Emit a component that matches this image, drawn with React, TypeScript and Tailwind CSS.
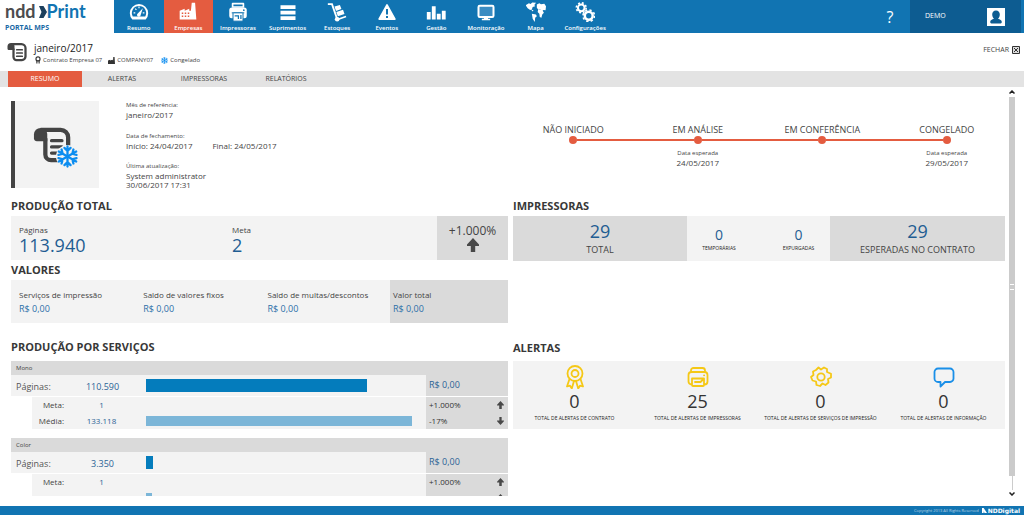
import type { ReactNode } from "react";

const navItems: { label: string; icon: ReactNode }[] = [
  {
    label: "Resumo",
    icon: (
      <>
        <path d="M4 21A11 11 0 1 1 20 21Z" fill="#fff" />
        <path d="M4.500 17.500A8.600 8.600 0 1 1 19.500 17.500Z" fill="#1174b2" />
        <path d="M5.500 13h2M7.500 8l1.400 1.400M12 5.500v2M16.500 13h2" stroke="#fff" strokeWidth="1.400" />
        <path d="M16.600 7.400 14 15.500a2.200 2.200 0 1 1-3.200-2Z" fill="#fff" />
      </>
    ),
  },
  {
    label: "Empresas",
    icon: (
      <>
        <path d="M2 21V10.500l6-2.500v2.500L13.500 8v2.500h2L16.500 1h4L22 21Z" fill="#fff" />
        <path d="M4.500 13.500h9.500M4.500 17h9.500" stroke="#e45c40" strokeWidth="1.700" strokeDasharray="1.800 1.800" />
      </>
    ),
  },
  {
    label: "Impressoras",
    icon: (
      <>
        <path d="M5.500 2h13v4h-13Z" fill="#1174b2" stroke="#fff" strokeWidth="2" strokeLinejoin="round" />
        <rect x="1.500" y="6.500" width="21" height="13" rx="3" fill="#fff" />
        <path d="M4.500 13h15" stroke="#1174b2" strokeWidth="1.300" />
        <rect x="6" y="13" width="12" height="10" rx="1" fill="#fff" stroke="#1174b2" strokeWidth="1.200" />
        <path d="M8 16.500h4.500v4M15.500 15.500v5" stroke="#1174b2" strokeWidth="1.500" fill="none" />
        <circle cx="19" cy="9.800" r="1" fill="#1174b2" />
      </>
    ),
  },
  {
    label: "Suprimentos",
    icon: <path d="M3 4h18v4.500H3ZM3 10.500h18V15H3ZM3 17h18v4.500H3Z" fill="#fff" />,
  },
  {
    label: "Estoques",
    icon: (
      <>
        <path d="M1 2.500h5L12 20" fill="none" stroke="#fff" strokeWidth="2.200" />
        <path d="m9 5.500 6.500-2 1.800 5-6.500 2.200ZM11.200 12l8-2.600 1.800 5-8 2.700ZM14 19.500l8.500-3 .7 1.800-8.500 3Z" fill="#fff" />
        <circle cx="12.200" cy="20.700" r="2.800" fill="#fff" />
      </>
    ),
  },
  {
    label: "Eventos",
    icon: (
      <>
        <path d="M12 3.500 21.500 20.500H2.500Z" fill="#fff" stroke="#fff" strokeWidth="2" strokeLinejoin="round" />
        <path d="M12 8.500v6.500M12 16.800v2.400" stroke="#1174b2" strokeWidth="2.400" />
      </>
    ),
  },
  {
    label: "Gestão",
    icon: <path d="M1 12h4.600v9H1ZM7 5h4.600v16H7ZM13 14h4.600v7H13ZM19 10.500h4.600V21H19Z" fill="#fff" />,
  },
  {
    label: "Monitoração",
    icon: (
      <>
        <rect x="3" y="4.500" width="18" height="13.500" rx="1.500" fill="#3a8cc2" stroke="#fff" strokeWidth="2.400" />
        <path d="M9.500 18h5v2h2.500v2H7v-2h2.500Z" fill="#fff" />
      </>
    ),
  },
  {
    label: "Mapa",
    icon: (
      <path
        d="M0 3.500 3.500 1.500l2 1 2-2 4.500.5-2 2.500 1 1.500-3 1-1 3-2 .5-3-2-2-3ZM7 14l5 1 1 2-2 2-.5 5-2.500-4ZM13 3l3-1.500 2 1.300 4-.8 2 3-.5 5-2.500-.5-2 1.500-2-2-2 .500-2-2.500ZM14.500 9.500h5l2 3.500-2 2-1 4-2-1-.500-4-2-2ZM6 9l3 1-1 1.500Z"
        fill="#fff"
      />
    ),
  },
  {
    label: "Configurações",
    icon: (
      <>
        <circle cx="7.500" cy="7" r="4" fill="none" stroke="#fff" strokeWidth="2.400" />
        <circle cx="7.500" cy="7" r="5.900" fill="none" stroke="#fff" strokeWidth="2" strokeDasharray="2.320 2.320" />
        <circle cx="16.500" cy="16.500" r="4.700" fill="none" stroke="#fff" strokeWidth="3" />
        <circle cx="16.500" cy="16.500" r="6.900" fill="none" stroke="#fff" strokeWidth="2" strokeDasharray="2.710 2.710" />
      </>
    ),
  },
];

const tabs = [
  { label: "RESUMO", width: "w-[74px]" },
  { label: "ALERTAS", width: "w-[74px]" },
  { label: "IMPRESSORAS", width: "w-[84px]" },
  { label: "RELATÓRIOS", width: "w-[74px]" },
];

const values = [
  { label: "Serviços de impressão", value: "R$ 0,00" },
  { label: "Saldo de valores fixos", value: "R$ 0,00" },
  { label: "Saldo de multas/descontos", value: "R$ 0,00" },
];

const services = [
  { name: "Mono", pages: "110.590", pagesBar: 79, goal: "1", average: "133.118", averageBar: 95, price: "R$ 0,00", goalDiff: "+1.000%", averageDiff: "-17%" },
  { name: "Color", pages: "3.350", pagesBar: 2.5, goal: "1", average: "2.989", averageBar: 2, price: "R$ 0,00", goalDiff: "+1.000%", averageDiff: "+12%" },
];

const steps = [
  { label: "NÃO INICIADO", date: "" },
  { label: "EM ANÁLISE", date: "24/05/2017" },
  { label: "EM CONFERÊNCIA", date: "" },
  { label: "CONGELADO", date: "29/05/2017" },
];

function ScrollIcon({ className }: { className: string }) {
  return (
    <svg viewBox="0 0 40 40" className={className} fill="none" stroke="currentColor" aria-hidden="true">
      <path d="M8 4h21a8 8 0 0 1 8 8v17a7 7 0 0 1-7 7H19a6 6 0 0 1-6-6V13" strokeWidth="4.500" />
      <path d="M8 2a7 7 0 0 0-7 7v4c0 2 1.500 3 3 3H15V9c0-4-3-7-7-7Z" fill="currentColor" stroke="none" />
      <path d="M19.500 15.500h11M19.500 22h11M19.500 28.500h11" strokeWidth="3.400" strokeLinecap="round" />
    </svg>
  );
}

function Snowflake({ className }: { className: string }) {
  const arm = "M12 12V1.500M8.800 3 12 6.200 15.200 3";
  return (
    <svg viewBox="0 0 24 24" className={className} fill="none" stroke="#0c8df0" strokeWidth="2.400" strokeLinecap="round" aria-hidden="true">
      {[0, 60, 120, 180, 240, 300].map((a) => (
        <path key={a} d={arm} transform={`rotate(${a} 12 12)`} />
      ))}
    </svg>
  );
}

function Arrow({ down = false, className }: { down?: boolean; className: string }) {
  return (
    <svg viewBox="0 0 12 14" className={className} fill="#484848" aria-hidden="true">
      <path d={down ? "M4 0h4v6h4v1.500L6 14 0 7.500V6h4Z" : "M6 0l6 6.500V8H8.200v6H3.800V8H0V6.500Z"} />
    </svg>
  );
}

function Heading({ children }: { children: ReactNode }) {
  return <h2 className="text-[11px] leading-5 font-bold text-[#383838]">{children}</h2>;
}

function ServiceBlock({ s }: { s: (typeof services)[number] }) {
  return (
    <div className="mb-[9px]">
      <h3 className="h-[14px] bg-[#dadada] pl-[5px] text-[6px] leading-[15px] text-[#444]">{s.name}</h3>
      <div className="flex h-[21px] bg-[#f3f3f3]">
        <div className="w-[55px] pl-[5px] text-[9px] leading-6 text-[#555]">Páginas:</div>
        <div className="w-[73px] text-center text-[9px] leading-6 text-[#2b6396]">{s.pages}</div>
        <div className="flex flex-1 items-center pl-[7px]">
          <div className="h-[13px] bg-[#047cbc]" style={{ width: `${s.pagesBar}%` }} />
        </div>
        <div className="w-[82px] bg-[#dadada] pl-[3px] text-[9px] leading-5 text-[#2b6396]">{s.price}</div>
      </div>
      <div className="mt-px ml-[21px] bg-[#f3f3f3] text-[8px] leading-4">
        <div className="flex h-4">
          <div className="w-8 text-right text-[#444]">Meta:</div>
          <div className="w-[75px] text-center text-[#2b6396]">{s.goal}</div>
          <div className="flex-1" />
          <div className="flex w-[82px] items-center justify-between bg-[#dadada] pr-1 pl-[3px] text-[#333]">
            {s.goalDiff}
            <Arrow className="h-2 w-[7px]" />
          </div>
        </div>
        <div className="flex h-4">
          <div className="w-8 text-right text-[#444]">Média:</div>
          <div className="w-[75px] text-center text-[#2b6396]">{s.average}</div>
          <div className="flex flex-1 items-center pl-[7px]">
            <div className="h-[10px] bg-[#7cb6d8]" style={{ width: `${s.averageBar}%` }} />
          </div>
          <div className="flex w-[82px] items-center justify-between bg-[#dadada] pr-1 pl-[3px] text-[#333]">
            {s.averageDiff}
            <Arrow down={s.averageDiff.startsWith("-")} className="h-2 w-[7px]" />
          </div>
        </div>
      </div>
    </div>
  );
}

const gold = "#f5c816";
const alerts: { label: string; count: string; icon: ReactNode }[] = [
  {
    label: "TOTAL DE ALERTAS DE CONTRATO",
    count: "0",
    icon: (
      <g stroke={gold}>
        <circle cx="12" cy="8.500" r="7.500" />
        <circle cx="12" cy="8.500" r="3.500" />
        <path d="M6.500 14 4 21.500l3-.8 1.800 2.800L11 16M17.500 14l2.500 7.500-3-.8-1.800 2.800L13 16" />
      </g>
    ),
  },
  {
    label: "TOTAL DE ALERTAS DE IMPRESSORAS",
    count: "25",
    icon: (
      <g stroke={gold}>
        <path d="M5 7V5.500a2.500 2.500 0 0 1 2.500-2.500h9A2.500 2.500 0 0 1 19 5.500V7M6 19.500H5.500A3 3 0 0 1 2.500 16.500v-6.500a3 3 0 0 1 3-3h13a3 3 0 0 1 3 3v6.500a3 3 0 0 1-3 3H18M6 13.500h12V20a1 1 0 0 1-1 1H7a1 1 0 0 1-1-1ZM18 10.300h.2M17 14.500 14.500 17H9" />
      </g>
    ),
  },
  {
    label: "TOTAL DE ALERTAS DE SERVIÇOS DE IMPRESSÃO",
    count: "0",
    icon: (
      <g stroke={gold}>
        <path d="m9.500 2.500 2.500 2 3-2 3 1.500v3l4 1.800v3.700l-3 1.500.500 3.500-3 2.500-3-1.500-2.500 2.500-3.500-1-.500-3.500-3.500-1L2 12l2.500-2-.5-3.500 3-1.500Z" />
        <circle cx="12" cy="12" r="3.700" />
      </g>
    ),
  },
  {
    label: "TOTAL DE ALERTAS DE INFORMAÇÃO",
    count: "0",
    icon: <path stroke="#1a8fe8" d="M6 3.500h12a3.500 3.500 0 0 1 3.500 3.500v6.500A3.500 3.500 0 0 1 18 17h-5l-4.500 4.500V17H6a3.500 3.500 0 0 1-3.500-3.500V7A3.500 3.500 0 0 1 6 3.500Z" />,
  },
];

export default function App() {
  return (
    <div className="flex h-screen flex-col overflow-hidden bg-white font-['Open_Sans','Noto_Sans',sans-serif] text-[#444]">
      <header className="flex h-[33px] shrink-0 bg-[#1174b2] text-white">
        <a href="#" className="flex w-[114px] flex-col bg-white pl-[5px]">
          <span className="flex items-center font-['Lato','Open_Sans',sans-serif] text-[18px] leading-[23px] font-bold text-[#4c4c4e]">
            ndd
            <svg viewBox="0 0 8 12" className="ml-[3px] h-3 w-2" aria-hidden="true">
              <path d="M0 0h4.500L8 6l-3.500 6H0l2.500-6Z" fill="#1c3f5c" />
            </svg>
            <span className="text-[#1174b2]">Print</span>
          </span>
          <span className="text-[7px] leading-[9px] font-bold text-[#1868a5]">PORTAL MPS</span>
        </a>
        <nav className="flex w-[496px]">
          {navItems.map((n, i) => (
            <a
              key={n.label}
              href="#"
              className={
                "flex min-w-0 flex-1 flex-col items-center pt-[2px] text-[6px] font-semibold whitespace-nowrap " + (i === 1 ? "bg-[#e45c40]" : "")
              }
            >
              <svg viewBox="0 0 24 24" className="size-5 shrink-0" aria-hidden="true">
                {n.icon}
              </svg>
              <span className="leading-[13px]">{n.label}</span>
            </a>
          ))}
        </nav>
        <button className="ml-auto w-10 text-[16px] leading-8">?</button>
        <div className="mr-[3px] flex w-[111px] items-center justify-between bg-[#0d5c91] pr-4 pl-[15px] text-[7px]">
          DEMO
          <svg viewBox="0 0 18 18" className="size-[18px]" aria-hidden="true">
            <path d="M0 0h18v18H0Z" fill="#fff" />
            <path d="M9 2.500c2.500 0 3.800 1.700 3.800 4 0 1.800-.8 3.300-1.800 4.200 2 .8 3.800 1.300 3.800 3.300 0 1-1 1.500-2 1.500H5.200c-1 0-2-.5-2-1.500 0-2 1.800-2.500 3.800-3.300-1-.9-1.800-2.400-1.800-4.200 0-2.300 1.300-4 3.800-4Z" fill="#0d5c91" />
          </svg>
        </div>
      </header>

      <div className="flex h-[38px] shrink-0 items-center pr-1 pl-[7px]">
        <ScrollIcon className="size-5 text-[#444]" />
        <div className="ml-[7px] pt-[2px]">
          <h1 className="text-[10px] leading-[14px] text-[#222]">janeiro/2017</h1>
          <div className="flex h-[11px] items-center text-[6px] text-[#444]">
            <svg viewBox="0 0 8 10" className="mr-[2px] ml-px h-2 w-[6px]" fill="none" stroke="#333" strokeWidth="1.500" aria-hidden="true">
              <circle cx="4" cy="3.500" r="2.700" />
              <path d="M2.500 6v3.500M5.500 6v3.500" />
            </svg>
            Contrato Empresa 07
            <svg viewBox="0 0 8 8" className="mr-[2px] ml-[6px] size-[7px]" fill="#333" aria-hidden="true">
              <path d="M0 8V4l2.500-1v1L5 3l.8 1L6 0h1.500L8 8Z" />
            </svg>
            COMPANY07
            <Snowflake className="mr-[2px] ml-2 size-[7px]" />
            Congelado
          </div>
        </div>
        <button className="mb-1 ml-auto flex items-center gap-[3px] text-[7px]">
          FECHAR
          <svg viewBox="0 0 8 8" className="size-2" fill="#ddd" stroke="#333" aria-hidden="true">
            <path d="M.5.500h7v7h-7ZM2 2l4 4M6 2 2 6" />
          </svg>
        </button>
      </div>

      <nav className="flex h-4 shrink-0 gap-[3px] bg-[#e3e3e3] pl-2 text-[7px]">
        {tabs.map((t, i) => (
          <button key={t.label} className={t.width + (i === 0 ? " bg-[#e45c40] text-white" : "")}>
            {t.label}
          </button>
        ))}
      </nav>

      <div className="flex min-h-0 flex-1">
        <main className="mb-[10px] flex min-w-0 flex-1 flex-col overflow-hidden pr-1 pl-[11px]">
          <section className="flex h-[109px] shrink-0 pt-[14px]">
            <div className="flex h-[87px] w-[88px] items-center justify-center border-l-4 border-[#444] bg-[#f3f3f3] pr-[10px]">
              <div className="relative">
                <ScrollIcon className="size-[38px] text-[#444]" />
                <span className="absolute -right-2 -bottom-1 rounded-full bg-[#f3f3f3]">
                  <Snowflake className="size-[23px]" />
                </span>
              </div>
            </div>
            <dl className="ml-[27px] text-[8px] leading-[9px]">
              <dt className="text-[6px]">Mês de referência:</dt>
              <dd className="mb-[13px]">janeiro/2017</dd>
              <dt className="text-[6px]">Data de fechamento:</dt>
              <dd className="mb-[12px] flex gap-[20px]">
                <span>Início: 24/04/2017</span>
                <span>Final: 24/05/2017</span>
              </dd>
              <dt className="text-[6px]">Última atualização:</dt>
              <dd>
                System administrator
                <br />
                30/06/2017 17:31
              </dd>
            </dl>
            <ol className="mt-[23px] -mr-1 ml-auto flex w-[498px] text-center">
              {steps.map((s, i) => (
                <li key={s.label} className="min-w-0 flex-1">
                  <div className="text-[9px] leading-3 whitespace-nowrap">{s.label}</div>
                  <div className="flex h-2 items-center">
                    <span className={"h-[2px] flex-1 " + (i > 0 ? "bg-[#e45c40]" : "")} />
                    <span className="size-2 rounded-full bg-[#e45c40]" />
                    <span className={"h-[2px] flex-1 " + (i < 3 ? "bg-[#e45c40]" : "")} />
                  </div>
                  {s.date && (
                    <div className="pt-[5px] text-[8px] leading-[9px]">
                      <div className="text-[6px] leading-[9px]">Data esperada</div>
                      {s.date}
                    </div>
                  )}
                </li>
              ))}
            </ol>
          </section>

          <div className="grid grid-cols-[497fr_492fr] gap-x-[5px]">
            <div className="min-w-0">
              <Heading>PRODUÇÃO TOTAL</Heading>
              <div className="flex h-11 bg-[#f3f3f3]">
                <div className="w-1/2 flex-1 pt-[8px] pl-2">
                  <div className="text-[8px] leading-3">Páginas</div>
                  <div className="text-[18px] leading-[18px] text-[#1f5d92]">113.940</div>
                </div>
                <div className="w-1/2 flex-1 pt-[8px] pl-2">
                  <div className="text-[8px] leading-3">Meta</div>
                  <div className="text-[18px] leading-[18px] text-[#1f5d92]">2</div>
                </div>
                <div className="flex w-[71px] flex-col items-center bg-[#dadada] pt-2 text-[12px] leading-[14px]">
                  +1.000%
                  <Arrow className="h-[14px] w-3" />
                </div>
              </div>
              <Heading>VALORES</Heading>
              <div className="flex h-[43px] bg-[#f3f3f3] text-[8px] leading-[14px]">
                {values.map((v) => (
                  <div key={v.label} className="w-1/4 pt-2 pl-2">
                    <div>{v.label}</div>
                    <div className="text-[9px] text-[#2b6fa8]">{v.value}</div>
                  </div>
                ))}
                <div className="ml-auto w-[118px] bg-[#dadada] pt-2 pl-[3px]">
                  <div>Valor total</div>
                  <div className="text-[9px] text-[#2b6fa8]">R$ 0,00</div>
                </div>
              </div>
              <div className="mt-[14px] mb-1">
                <Heading>PRODUÇÃO POR SERVIÇOS</Heading>
              </div>
              {services.map((s) => (
                <ServiceBlock key={s.name} s={s} />
              ))}
            </div>

            <div className="min-w-0">
              <Heading>IMPRESSORAS</Heading>
              <div className="grid h-[45px] grid-cols-[174fr_64fr_79fr_175fr] bg-[#f3f3f3] text-center">
                <div className="bg-[#dadada] pt-[5px]">
                  <div className="text-[18px] leading-5 text-[#1f5d92]">29</div>
                  <div className="text-[9px] leading-[18px]">TOTAL</div>
                </div>
                <div className="pt-[11px]">
                  <div className="text-[14px] leading-4 text-[#1f5d92]">0</div>
                  <div className="text-[5px] leading-[10px] text-[#222]">TEMPORÁRIAS</div>
                </div>
                <div className="pt-[11px] pl-4">
                  <div className="text-[14px] leading-4 text-[#1f5d92]">0</div>
                  <div className="text-[5px] leading-[10px] text-[#222]">EXPURGADAS</div>
                </div>
                <div className="bg-[#dadada] pt-[5px]">
                  <div className="text-[18px] leading-5 text-[#1f5d92]">29</div>
                  <div className="text-[9px] leading-[18px]">ESPERADAS NO CONTRATO</div>
                </div>
              </div>
              <div className="mt-[77px] mb-[3px]">
                <Heading>ALERTAS</Heading>
              </div>
              <div className="grid h-[68px] grid-cols-4 bg-[#f3f3f3] text-center text-[#333]">
                {alerts.map((a) => (
                  <div key={a.label} className="flex min-w-0 flex-col items-center pt-1 whitespace-nowrap">
                    <svg viewBox="0 0 24 24" className="size-6" fill="none" strokeWidth="1.800" strokeLinejoin="round" strokeLinecap="round" aria-hidden="true">
                      {a.icon}
                    </svg>
                    <div className="text-[18px] leading-[25px]">{a.count}</div>
                    <div className="text-[5px] leading-2 text-[#222]">{a.label}</div>
                  </div>
                ))}
              </div>
            </div>
          </div>
        </main>

        <div className="mr-[9px] flex w-[6px] flex-col items-center pt-[3px] pb-[10px]" aria-hidden="true">
          <svg viewBox="0 0 6 4" className="h-1 w-[6px]" fill="none" stroke="#222" strokeWidth="1.500">
            <path d="M.5 3.500 3 1l2.500 2.500" />
          </svg>
          <div className="mt-[3px] flex w-full flex-1 items-center justify-center bg-[#cbcbcb]">
            <div className="h-[6px] w-1 border-y border-white" />
          </div>
          <div className="h-[14px] w-px bg-[#ccc]" />
          <svg viewBox="0 0 6 4" className="mt-[2px] h-1 w-[6px]" fill="none" stroke="#222" strokeWidth="1.500">
            <path d="M.5.500 3 3 5.500.500" />
          </svg>
        </div>
      </div>

      <footer className="flex h-[9px] shrink-0 items-center justify-end gap-[3px] bg-[#1174b2] pr-1 text-[4px] leading-none text-white/70">
        <span>Copyright 2013 All Rights Reserved</span>
        <span className="flex items-center font-['DejaVu_Sans',sans-serif] text-[6px] font-bold text-white">
          <svg viewBox="0 0 6 6" className="mr-px size-[5px]" fill="#fff" aria-hidden="true">
            <path d="M0 0h2l2 3 2 3H3L2 4v2H0Z" />
          </svg>
          NDDigital
        </span>
      </footer>
    </div>
  );
}
